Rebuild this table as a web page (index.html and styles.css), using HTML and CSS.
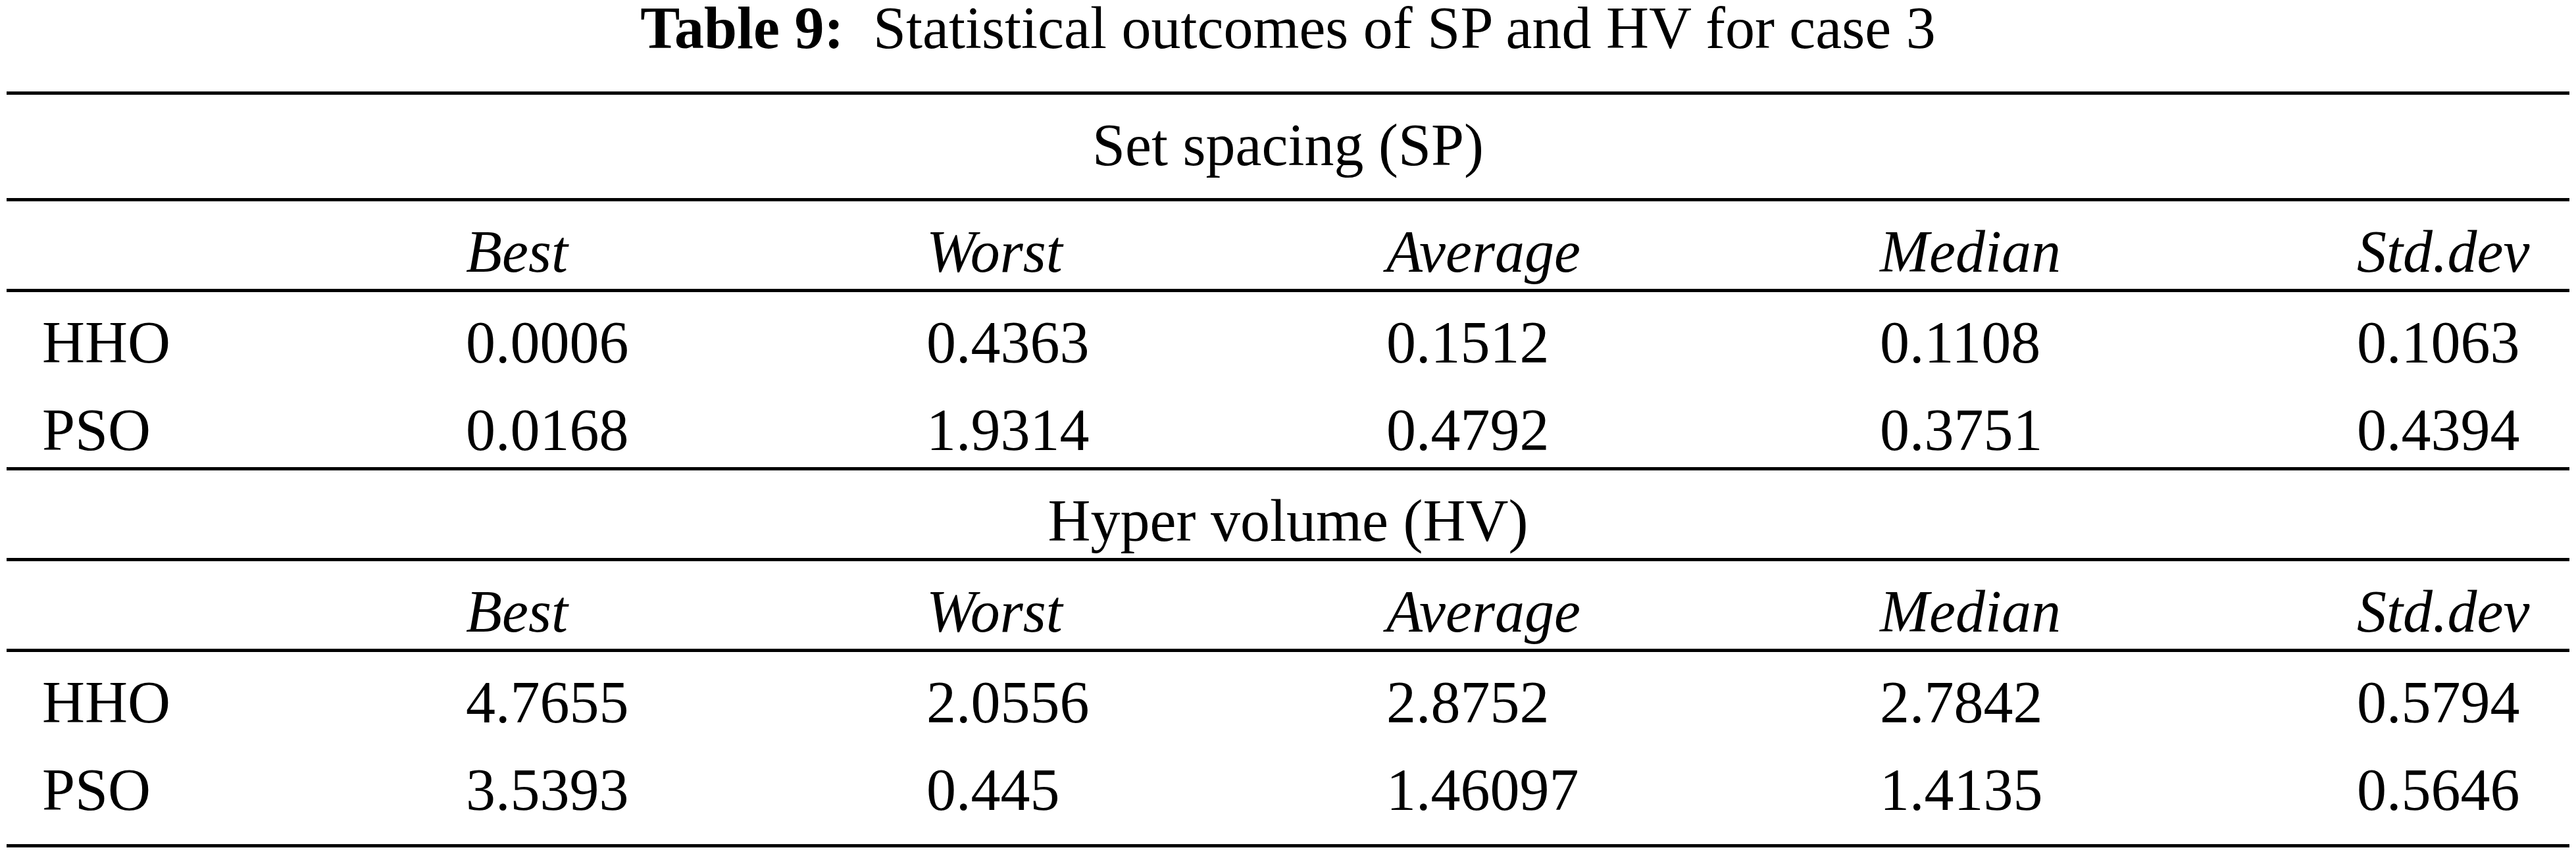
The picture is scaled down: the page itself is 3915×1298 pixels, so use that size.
FILE: index.html
```html
<!DOCTYPE html>
<html lang="en">
<head>
<meta charset="utf-8">
<title>Table 9: Statistical outcomes of SP and HV for case 3</title>
<link rel="stylesheet" href="styles.css">
</head>
<body>
<main class="page">
  <h1 class="caption"><span class="caption-label">Table 9:</span> Statistical outcomes of SP and HV for case 3</h1>
  <section class="stats">
    <div class="group-title group-title--first">Set spacing (SP)</div>
    <div class="row row--head">
      <span class="cell"></span>
      <span class="cell">Best</span>
      <span class="cell">Worst</span>
      <span class="cell">Average</span>
      <span class="cell">Median</span>
      <span class="cell">Std.dev</span>
    </div>
    <div class="row">
      <span class="cell">HHO</span>
      <span class="cell">0.0006</span>
      <span class="cell">0.4363</span>
      <span class="cell">0.1512</span>
      <span class="cell">0.1108</span>
      <span class="cell">0.1063</span>
    </div>
    <div class="row row--end">
      <span class="cell">PSO</span>
      <span class="cell">0.0168</span>
      <span class="cell">1.9314</span>
      <span class="cell">0.4792</span>
      <span class="cell">0.3751</span>
      <span class="cell">0.4394</span>
    </div>
    <div class="group-title">Hyper volume (HV)</div>
    <div class="row row--head">
      <span class="cell"></span>
      <span class="cell">Best</span>
      <span class="cell">Worst</span>
      <span class="cell">Average</span>
      <span class="cell">Median</span>
      <span class="cell">Std.dev</span>
    </div>
    <div class="row">
      <span class="cell">HHO</span>
      <span class="cell">4.7655</span>
      <span class="cell">2.0556</span>
      <span class="cell">2.8752</span>
      <span class="cell">2.7842</span>
      <span class="cell">0.5794</span>
    </div>
    <div class="row row--end row--final">
      <span class="cell">PSO</span>
      <span class="cell">3.5393</span>
      <span class="cell">0.445</span>
      <span class="cell">1.46097</span>
      <span class="cell">1.4135</span>
      <span class="cell">0.5646</span>
    </div>
  </section>
</main>
</body>
</html>
```

FILE: styles.css
```css
html, body {
  margin: 0;
  padding: 0;
  background: #ffffff;
}

body {
  font-family: "Liberation Serif", "Times New Roman", serif;
  font-size: 90px;
  color: #000000;
}

.page {
  padding: 0 10px;
}

.caption {
  margin: 0 0 53px;
  font-size: 90px;
  font-weight: normal;
  line-height: 86px;
  text-align: center;
  white-space: nowrap;
}

.caption-label {
  font-weight: bold;
  margin-right: 22px;
}

.stats {
  border-top: 5px solid #000000;
}

.group-title {
  padding: 32px 0 11px;
  line-height: 90px;
  text-align: center;
  border-bottom: 5px solid #000000;
}

.group-title--first {
  padding-bottom: 35px;
}

.row {
  display: grid;
  grid-template-columns: 644px 700px 699px 750px 725px 1fr;
  padding: 32px 0 11px 54px;
  line-height: 90px;
}

.row--head {
  font-style: italic;
  border-bottom: 5px solid #000000;
}

.row--end {
  border-bottom: 5px solid #000000;
}

.row--final {
  padding-bottom: 37px;
}

.cell {
  white-space: nowrap;
}
```
